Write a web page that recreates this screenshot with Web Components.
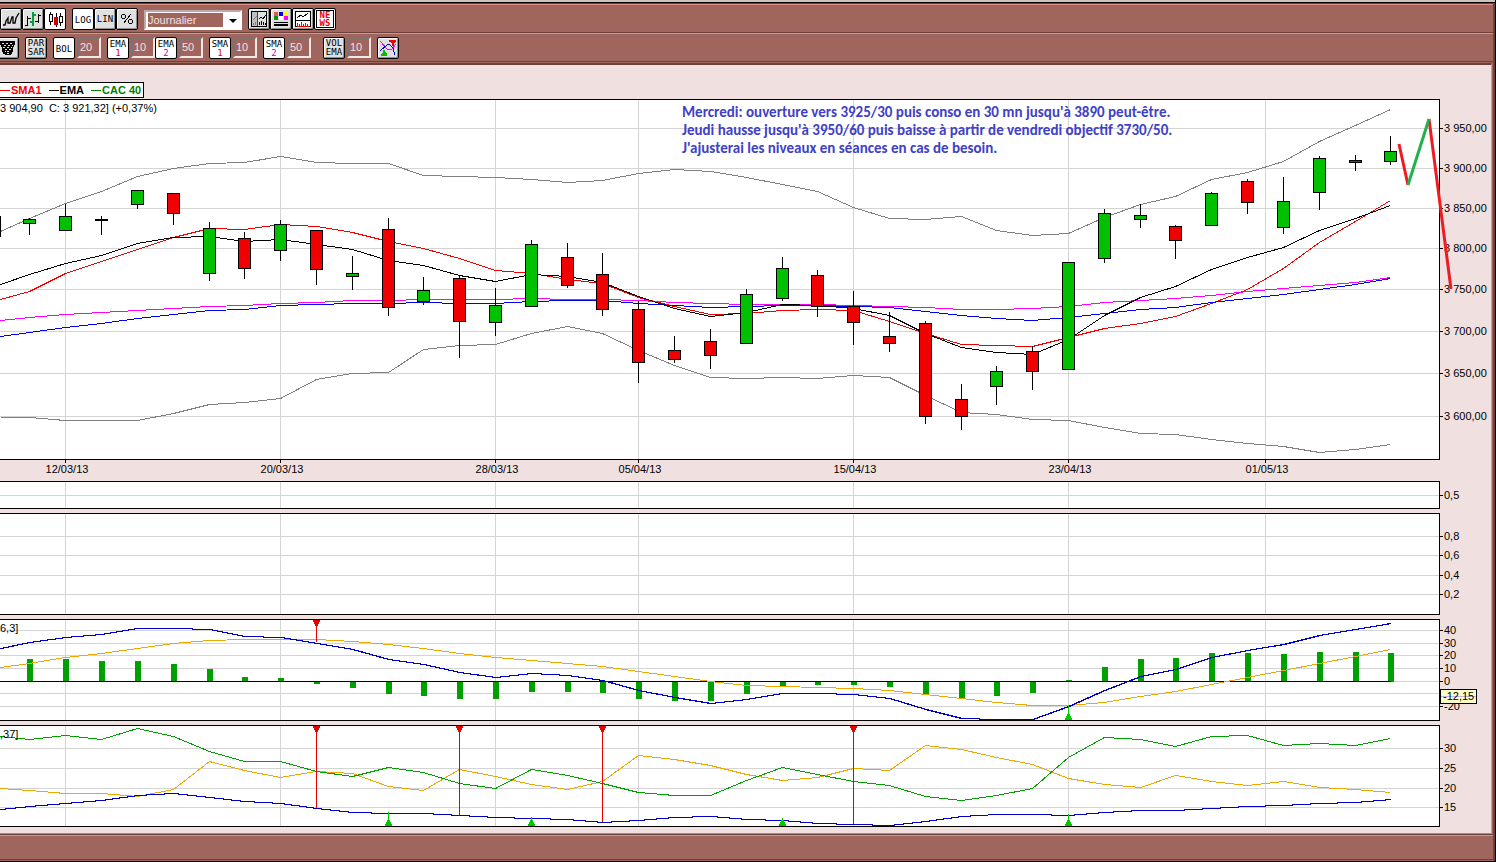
<!DOCTYPE html>
<html lang="fr">
<head>
<meta charset="utf-8">
<title>CAC 40</title>
<style>
    body {
        margin: 0;
        overflow-x: hidden;
        font-family: "Liberation Sans", Arial, sans-serif;
        font-size: 11px;
        color: #000;
        --brown: #a0665e;
        --light: #e09084;
        --dark: #6e4039;
        --paper: #f0e0e0;
    }
</style>
</head>
<body>
<trading-window>
    <tool-bar slot="bars" label="Affichage">
        <tool-group>
            <tool-button icon="line" label="Ligne"></tool-button>
            <tool-button icon="bars" label="Barres"></tool-button>
            <tool-button icon="candles" label="Chandeliers" pressed></tool-button>
        </tool-group>
        <tool-group>
            <tool-button label="Logarithmique" pressed>LOG</tool-button>
            <tool-button label="Linéaire">LIN</tool-button>
            <tool-button icon="percent" label="Pourcentage"></tool-button>
        </tool-group>
        <period-select></period-select>
        <tool-group>
            <tool-button icon="compare" label="Comparer"></tool-button>
            <tool-button icon="colors" label="Couleurs"></tool-button>
            <tool-button icon="volume" label="Volume"></tool-button>
            <tool-button label="News" tone="#f00000" pressed framed>NE<br>WS</tool-button>
        </tool-group>
    </tool-bar>
    <tool-bar slot="bars" label="Indicateurs" scrolled>
        <tool-button icon="trash" label="Effacer"></tool-button>
        <tool-button label="Parabolic SAR">PAR<br>SAR</tool-button>
        <tool-field label="Bollinger" value="20" pressed>BOL</tool-field>
        <tool-group>
            <tool-field label="EMA 1" value="10" pressed>EMA<br><span style="color:#e00000">1</span></tool-field>
            <tool-field label="EMA 2" value="50" pressed>EMA<br><span style="color:#c000c0">2</span></tool-field>
        </tool-group>
        <tool-field label="SMA 1" value="10" pressed>SMA<br><span style="color:#e00000">1</span></tool-field>
        <tool-field label="SMA 2" value="50" pressed>SMA<br><span style="color:#c000c0">2</span></tool-field>
        <tool-group spaced>
            <tool-field label="Volume EMA" value="10">VOL<br>EMA</tool-field>
        </tool-group>
        <tool-button icon="signals" label="Signaux"></tool-button>
    </tool-bar>
    <chart-legend>
        <legend-item color="#f00000">SMA1</legend-item>
        <legend-item color="#000000">EMA</legend-item>
        <legend-item color="#008000">CAC 40</legend-item>
    </chart-legend>
    <chart-pane name="price">
        <span slot="title">3 904,90&nbsp; C: 3 921,32] (+0,37%)</span>
        <chart-note slot="note">Mercredi: ouverture vers 3925/30 puis conso en 30 mn jusqu'à 3890 peut-être.<br>Jeudi hausse jusqu'à 3950/60 puis baisse à partir de vendredi objectif 3730/50.<br>J'ajusterai les niveaux en séances en cas de besoin.</chart-note>
    </chart-pane>
    <chart-pane name="small"></chart-pane>
    <chart-pane name="empty"></chart-pane>
    <chart-pane name="macd"><span slot="title">6,3]</span></chart-pane>
    <chart-pane name="dmi"><span slot="title">,37]</span></chart-pane>
</trading-window>

<script>
// bar centres, one per trading day
const DAYS = [29, 65, 101, 137, 173, 209, 244, 280, 316, 352, 388, 423, 459, 495, 531, 567, 602, 638, 674, 710,
    746, 782, 817, 853, 889, 925, 961, 996, 1032, 1068, 1104, 1140, 1175, 1211, 1247, 1283, 1319, 1355, 1390];
const DATES = [[65, '12/03/13'], [280, '20/03/13'], [495, '28/03/13'], [638, '05/04/13'], [853, '15/04/13'], [1068, '23/04/13'], [1265, '01/05/13']];
const PLOT_WIDTH = 1439;

// high, body top, body bottom, low, direction
const CANDLES = [
    [218, 219, 223, 234, 'u'], [204, 216, 230, 230, 'u'], [216, 219, 220, 234, 'd'], [190, 190, 204, 208, 'u'],
    [193, 193, 213, 224, 'd'], [222, 228, 273, 280, 'u'], [232, 238, 268, 278, 'd'], [220, 224, 250, 260, 'u'],
    [230, 230, 269, 284, 'd'], [256, 273, 276, 289, 'u'], [218, 229, 307, 315, 'd'], [277, 290, 301, 304, 'u'],
    [275, 278, 321, 357, 'd'], [288, 305, 322, 335, 'u'], [240, 244, 306, 306, 'u'], [243, 257, 285, 287, 'd'],
    [253, 274, 309, 315, 'd'], [301, 309, 362, 382, 'd'], [336, 350, 359, 362, 'd'], [329, 341, 355, 368, 'd'],
    [289, 294, 343, 343, 'u'], [257, 268, 298, 300, 'u'], [270, 275, 306, 316, 'd'], [291, 306, 322, 344, 'd'],
    [312, 336, 343, 351, 'd'], [321, 323, 416, 423, 'd'], [384, 399, 416, 429, 'd'], [366, 371, 386, 404, 'u'],
    [346, 351, 371, 389, 'd'], [262, 262, 369, 369, 'u'], [209, 213, 258, 262, 'u'], [204, 215, 219, 227, 'u'],
    [225, 226, 240, 258, 'd'], [192, 193, 225, 225, 'u'], [179, 181, 202, 213, 'd'], [177, 201, 227, 233, 'u'],
    [156, 158, 192, 209, 'u'], [155, 160, 162, 170, 'd'], [136, 151, 161, 164, 'u']
];

// series values start at the left edge, then one per day
const PANES = {
    price: {
        top: 99, height: 361, dates: true, candles: true,
        scale: [[128, '3 950,00'], [168, '3 900,00'], [208, '3 850,00'], [248, '3 800,00'], [289, '3 750,00'], [331, '3 700,00'], [373, '3 650,00'], [416, '3 600,00']],
        series: [
            ['#808080', [231, 218, 203, 191, 176, 168, 163, 162, 156, 162, 163, 163, 175, 176, 177, 179, 182, 180, 173, 169, 171, 177, 184, 191, 207, 218, 219, 216, 230, 235, 233, 217, 204, 196, 179, 172, 161, 141, 125, 109]],
            ['#808080', [417, 417, 420, 420, 420, 413, 404, 402, 398, 379, 373, 372, 349, 345, 344, 333, 326, 333, 350, 365, 377, 378, 377, 378, 375, 377, 395, 412, 414, 419, 420, 427, 433, 434, 439, 443, 446, 452, 449, 444]],
            ['#f00000', [299, 291, 273, 261, 249, 237, 228, 229, 224, 226, 232, 241, 248, 258, 270, 273, 279, 283, 297, 306, 314, 313, 310, 309, 310, 321, 333, 344, 345, 346, 337, 328, 323, 316, 303, 289, 268, 242, 221, 200]],
            ['#ff00ff', [320, 317, 314, 312, 310, 308, 306, 305, 303, 302, 300, 300, 299, 299, 299, 298, 299, 299, 300, 302, 303, 304, 304, 304, 305, 306, 307, 309, 309, 308, 306, 302, 300, 298, 295, 291, 288, 285, 282, 277]],
            ['#0000f0', [336, 332, 327, 323, 318, 314, 310, 309, 305, 304, 303, 303, 302, 303, 303, 301, 300, 300, 303, 305, 307, 306, 305, 305, 306, 307, 311, 315, 318, 320, 317, 313, 309, 307, 302, 298, 294, 289, 284, 278]],
            ['#000000', [284, 274, 263, 255, 243, 237, 236, 241, 239, 244, 249, 260, 265, 275, 281, 274, 276, 282, 296, 308, 316, 312, 304, 305, 308, 315, 333, 347, 352, 354, 339, 315, 297, 286, 269, 257, 247, 230, 218, 205]]
        ]
    },
    small: {top: 481, height: 28, scale: [[495, '0,5']], series: []},
    empty: {top: 513, height: 102, scale: [[536, '0,8'], [555, '0,6'], [575, '0,4'], [594, '0,2']], series: []},
    macd: {
        top: 619, height: 102, zero: 681,
        scale: [[630, '40'], [643, '30'], [655, '20'], [668, '10'], [681, '0'], [693, ''], [706, '-20']],
        bars: [659, 659, 661, 661, 664, 669, 677, 678, 683, 687, 693, 695, 698, 698, 691, 691, 692, 698, 700, 700, 693, 685, 684, 684, 686, 694, 697, 695, 692, 680, 667, 659, 658, 653, 653, 654, 652, 652, 653],
        series: [
            ['#f0a800', [667, 663, 657, 653, 648, 643, 640, 639, 639, 639, 641, 644, 648, 653, 657, 660, 663, 666, 671, 676, 681, 685, 686, 687, 688, 690, 694, 698, 702, 705, 705, 702, 696, 691, 684, 677, 670, 663, 656, 649]],
            ['#0000c8', [648, 642, 637, 634, 628, 628, 629, 636, 637, 643, 649, 659, 664, 672, 677, 673, 675, 680, 690, 697, 703, 699, 693, 693, 694, 698, 709, 718, 719, 719, 706, 690, 676, 669, 657, 650, 644, 635, 629, 623], 'wide']
        ],
        sells: [[316, 642]],
        buys: [[1068, 706]],
        tag: [696, '-12,15']
    },
    dmi: {
        top: 725, height: 102,
        scale: [[748, '30'], [768, '25'], [788, '20'], [807, '15']],
        series: [
            ['#f0a800', [788, 790, 793, 793, 796, 789, 761, 770, 777, 771, 773, 786, 790, 769, 776, 784, 789, 781, 755, 759, 765, 774, 780, 777, 768, 770, 745, 749, 757, 764, 778, 784, 787, 775, 781, 785, 781, 787, 789, 792]],
            ['#00a000', [736, 739, 735, 739, 728, 736, 751, 761, 761, 771, 776, 767, 772, 783, 788, 769, 775, 783, 792, 795, 795, 780, 767, 774, 781, 785, 796, 800, 795, 788, 757, 737, 739, 746, 736, 735, 745, 743, 745, 738]],
            ['#0000c8', [809, 806, 803, 800, 795, 793, 797, 801, 803, 808, 812, 813, 813, 815, 817, 818, 819, 822, 820, 817, 816, 819, 820, 823, 824, 825, 821, 816, 814, 814, 815, 812, 810, 810, 808, 806, 805, 803, 802, 799], 'wide']
        ],
        sells: [[316, 808], [459, 815], [602, 822], [853, 824]],
        buys: [[388, 812], [531, 817], [782, 818], [1068, 814]]
    }
};

const ICONS = {
    line: '<path d="M2 16h2l1-4 2-3v5h2l2-6h1v6h2l1-5 3-5" fill="none" stroke="#000" stroke-width="1.300" shape-rendering="auto"/>',
    bars: '<path d="M4.500 7v10M2 16.500h2M5 9.500h3M15.500 5v9M12 12.500h3M16 6.500h2" stroke="#000" fill="none"/><path d="M10 3v14M7 13h3M10 6h3" stroke="#00a040" stroke-width="2" fill="none"/>',
    candles: '<path d="M5.500 3v2M5.500 13v3M15.500 4v3M15.500 14v3M4.500 5.500h3v7h-3zM14.500 7.500h3v6h-3z" fill="none" stroke="#000"/><path d="M11 4v14" stroke="#000"/><path d="M9 8h4v8H9z" fill="#d00000"/>',
    percent: '<circle cx="6.500" cy="7.500" r="2" fill="none" stroke="#000"/><circle cx="13.500" cy="12.500" r="2" fill="none" stroke="#000"/><path d="M13.500 5.500l-7 9" stroke="#000"/>',
    compare: '<path d="M3 3h6v14H3z" fill="#c0c0c0"/><path d="M2.500 2.500h15v15h-15z" fill="none" stroke="#000"/><path d="M4 11l4-4" stroke="#808080"/><path d="M4.500 14v2M6.500 13v3" stroke="#808080"/><path d="M8.500 3v14" stroke="#e00000"/><path d="M10 10l2-2 2 2 3-4" fill="none" stroke="#000"/><path d="M10.500 13v3M12.500 12v4M14.500 13v3M16.500 14v2" stroke="#000"/>',
    colors: '<path d="M3 3h4v4H3z" fill="#e05858"/><path d="M8 3h4v4H8z" fill="#0000f0"/><path d="M13 3h4v4h-4z" fill="#ffff00"/><path d="M3 7h4v4H3z" fill="#109010"/><path d="M8 7h4v4H8z" fill="#fff"/><path d="M13 7h4v4h-4z" fill="#ff00ff"/><path d="M3 13h14v1H3zM3 15h14v2H3z" fill="#000"/>',
    volume: '<path d="M2.500 2.500h15v15h-15z" fill="#fff" stroke="#000"/><path d="M2 11.500h15" stroke="#000"/><path d="M4 9l4-3 2 2 5-4" fill="none" stroke="#000"/><path d="M4 17.500h12" stroke="#f00000"/><path d="M4.500 14v3M6.500 15v2M8.500 13v4M10.500 15v2M12.500 14v3M14.500 15v2" stroke="#f00000"/>',
    trash: '<path d="M2 3h15v4h-1l-2 9-2 1H8l-3-1-2-9H2z" fill="#000"/><path d="M4 5h2M8 5h2M12 5h2M6 7h2M10 7h2M14 7h1M5 9h2M9 9h2M13 9h1M7 11h2M11 11h2M7 13h1M9 13h2M9 15h2" stroke="#e0e0e0"/>',
    signals: '<path d="M2 3l7 8h5l4-5" fill="none" stroke="#ff00ff"/><path d="M2 13l7-6 2-1 4 4 2 7" fill="none" stroke="#0000e0"/><path d="M11 2h7v2l-2 1v3h-2V5l-3-1z" fill="#f00000"/><path d="M5 12h2v2l2 2v2H3v-2l2-2z" fill="#00c000"/>'
};

const control = `
    * { box-sizing: border-box; }
    button {
        display: block;
        width: 22px;
        height: 22px;
        padding: 0;
        border: 1px solid #000;
        border-radius: 2px;
        background: #e0e0e0;
        box-shadow: inset 1px 1px #fff, inset -1px -1px #909090;
        color: #000;
        font: 9px/9px "DejaVu Sans Mono", monospace;
        text-align: center;
    }
    button.pressed { background: #fff; box-shadow: none; }
    button.pressed.text { padding-top: 2px; }
    button.pressed.framed {
        padding-top: 0;
        line-height: 8px;
        font-weight: bold;
        box-shadow: inset 0 0 0 1px #fff, inset 0 0 0 2px #000;
    }
    svg { display: block; }
`;

class TradingWindow extends HTMLElement {
    connectedCallback() {
        this.attachShadow({ mode: 'open' });
        this.shadowRoot.innerHTML = `
            <style>
                :host {
                    display: flex;
                    flex-direction: column;
                    box-sizing: border-box;
                    min-height: 100vh;
                    overflow: hidden;
                    background: var(--brown);
                    border-right: 1px solid #000;
                    border-bottom: 1px solid #000;
                }
                .edge {
                    height: 1px;
                    border-top: 2px solid #d0c4c0;
                    border-bottom: 1px solid var(--dark);
                    background: #000;
                }
                .frame {
                    flex: 1;
                    display: flex;
                    flex-direction: column;
                    border-right: 2px solid var(--dark);
                }
                main {
                    display: flex;
                    flex-direction: column;
                    gap: 4px;
                    margin-top: 1px;
                    padding: 17px 51px 6px 0;
                    background: var(--paper);
                    border-top: 2px solid var(--dark);
                    border-right: 1px solid var(--light);
                    border-bottom: 1px solid #c88078;
                    margin-right: 1px;
                }
                footer {
                    flex: 1;
                    min-height: 24px;
                    border-top: 1px solid var(--dark);
                    border-bottom: 1px solid var(--dark);
                    margin-bottom: 1px;
                    box-shadow: inset 0 1px var(--light);
                }
            </style>
            <div class="edge"></div>
            <div class="frame">
                <header><slot name="bars"></slot></header>
                <main><slot></slot></main>
                <footer></footer>
            </div>
        `;
    }
}

class ToolBar extends HTMLElement {
    connectedCallback() {
        this.attachShadow({ mode: 'open' });
        this.shadowRoot.innerHTML = `
            <style>
                :host {
                    display: block;
                    border-top: 1px solid var(--light);
                    border-bottom: 1px solid var(--dark);
                }
                div {
                    display: flex;
                    align-items: flex-start;
                    gap: 6px;
                    height: 24px;
                    padding-top: 3px;
                }
                /* the second row is scrolled a little to the left */
                :host([scrolled]) div { margin-left: -3px; }
            </style>
            <div role="toolbar" aria-label="${this.getAttribute('label')}"><slot></slot></div>
        `;
    }
}

class ToolGroup extends HTMLElement {
    connectedCallback() {
        this.attachShadow({ mode: 'open' });
        this.shadowRoot.innerHTML = `
            <style>
                :host { display: flex; }
                :host([spaced]) { margin-left: 6px; }
            </style>
            <slot></slot>
        `;
    }
}

class ToolButton extends HTMLElement {
    connectedCallback() {
        const icon = ICONS[this.getAttribute('icon')];
        const pressed = this.hasAttribute('pressed');
        this.attachShadow({ mode: 'open' });
        this.shadowRoot.innerHTML = `
            <style>
                ${control}
                :host { display: block; }
            </style>
            <button type="button" aria-label="${this.getAttribute('label')}" aria-pressed="${pressed}"
                class="${pressed ? 'pressed' : ''} ${icon ? '' : 'text'} ${this.hasAttribute('framed') ? 'framed' : ''}" style="color:${this.getAttribute('tone') || '#000'}">
                ${icon ? `<svg width="20" height="20" viewBox="0 0 20 20" shape-rendering="crispEdges" aria-hidden="true">${icon}</svg>` : '<slot></slot>'}
            </button>
        `;
    }
}

class ToolField extends HTMLElement {
    connectedCallback() {
        const label = this.getAttribute('label');
        const pressed = this.hasAttribute('pressed');
        this.attachShadow({ mode: 'open' });
        this.shadowRoot.innerHTML = `
            <style>
                ${control}
                :host { display: flex; gap: 2px; }
                input {
                    width: 24px;
                    height: 21px;
                    padding: 0 0 2px 1px;
                    border: 2px solid;
                    border-color: #807070 #f0e8e8 #f0e8e8 #807070;
                    border-radius: 0;
                    background: var(--brown);
                    color: #f0e0e0;
                    font: 11px "Liberation Sans", Arial, sans-serif;
                }
            </style>
            <button type="button" aria-label="${label}" aria-pressed="${pressed}" class="text ${pressed ? 'pressed' : ''}"><slot></slot></button>
            <input type="text" aria-label="${label} période" value="${this.getAttribute('value')}">
        `;
    }
}

class PeriodSelect extends HTMLElement {
    connectedCallback() {
        this.attachShadow({ mode: 'open' });
        this.shadowRoot.innerHTML = `
            <style>
                :host { display: block; position: relative; width: 98px; margin-top: 2px; }
                select {
                    appearance: none;
                    display: block;
                    box-sizing: border-box;
                    width: 100%;
                    height: 20px;
                    padding: 1px 17px 1px 2px;
                    border: 2px solid;
                    border-color: #c0a8a8 #fff #fff #c0a8a8;
                    border-radius: 0;
                    background: linear-gradient(var(--brown), var(--brown)) content-box, #fff;
                    color: #f0e0e0;
                    font: 11px/14px "Liberation Sans", Arial, sans-serif;
                }
                i {
                    position: absolute;
                    right: 5px;
                    top: 9px;
                    border: 4px solid transparent;
                    border-top-color: #000;
                    border-bottom: 0;
                    pointer-events: none;
                }
            </style>
            <select aria-label="Période">
                <option>Journalier</option>
                <option>Hebdomadaire</option>
                <option>Mensuel</option>
            </select>
            <i></i>
        `;
    }
}

class ChartLegend extends HTMLElement {
    connectedCallback() {
        this.attachShadow({ mode: 'open' });
        this.shadowRoot.innerHTML = `
            <style>
                :host {
                    display: flex;
                    align-self: flex-start;
                    gap: 7px;
                    box-sizing: border-box;
                    height: 16px;
                    margin-bottom: -3px;
                    padding-right: 2px;
                    border: 1px solid #000;
                    border-left: 0;
                    background: #fff;
                }
            </style>
            <slot></slot>
        `;
    }
}

class LegendItem extends HTMLElement {
    connectedCallback() {
        this.attachShadow({ mode: 'open' });
        this.shadowRoot.innerHTML = `
            <style>
                :host {
                    display: flex;
                    align-items: center;
                    gap: 1px;
                    color: ${this.getAttribute('color')};
                    font-weight: bold;
                    line-height: 14px;
                }
                i { width: 10px; height: 1px; background: currentColor; }
            </style>
            <i></i><slot></slot>
        `;
    }
}

class ChartNote extends HTMLElement {
    connectedCallback() {
        this.attachShadow({ mode: 'open' });
        this.shadowRoot.innerHTML = `
            <style>
                :host {
                    display: block;
                    color: #4040c8;
                    font: bold 15px/18px Carlito, Lato, sans-serif;
                    white-space: nowrap;
                }
            </style>
            <slot></slot>
        `;
    }
}

class ChartPane extends HTMLElement {
    connectedCallback() {
        const pane = PANES[this.getAttribute('name')];
        this.attachShadow({ mode: 'open' });
        this.shadowRoot.innerHTML = `
            <style>
                :host {
                    display: block;
                    position: relative;
                    box-sizing: border-box;
                    height: ${pane.height}px;
                    border: 1px solid #000;
                    border-left: 0;
                    background: #fff;
                }
                :host([name="price"]) { margin-bottom: 17px; }
                svg { display: block; width: 100%; height: 100%; overflow: visible; }
                text { font-size: 11px; }
                .title { position: absolute; left: 0; top: 2px; line-height: 12px; white-space: nowrap; }
                .note { position: absolute; left: calc(100% - 757px); top: 3px; }
            </style>
            <svg shape-rendering="crispEdges">${this.draw(pane)}</svg>
            <div class="title"><slot name="title"></slot></div>
            <div class="note"><slot name="note"></slot></div>
        `;
    }

    // everything is anchored to the right edge, older days run off to the left
    draw(pane) {
        const bottom = pane.top + pane.height - 1;
        const y0 = pane.top + 1;
        let out = '';
        pane.scale.forEach(([y]) => {
            out += `<rect y="${y - y0}" width="100%" height="1" fill="#d4d4d4"/>`;
        });
        out += `<svg x="100%" overflow="visible"><g transform="translate(${-PLOT_WIDTH} ${-y0})">`;
        DATES.forEach(([x, label]) => {
            out += `<rect x="${x}" y="${y0}" width="1" height="${bottom - y0}" fill="#d4d4d4"/>`;
            if (pane.dates) {
                out += `<rect x="${x}" y="${bottom}" width="1" height="4"/><text x="${x + 2}" y="473" text-anchor="middle">${label}</text>`;
            }
        });
        pane.scale.forEach(([y, label]) => {
            if (label) out += `<rect x="1440" y="${y}" width="3" height="1"/><text x="1444" y="${y + 4}">${label}</text>`;
        });
        (pane.bars || []).forEach((y, i) => {
            const top = Math.min(y, pane.zero);
            out += `<rect x="${DAYS[i] - 2}" y="${top}" width="6" height="${Math.abs(y - pane.zero) + 1}" fill="#00a000"/>`;
        });
        if (pane.zero) out += `<rect y="${pane.zero}" width="1391" height="1"/>`;
        pane.series.forEach(([color, values, wide]) => {
            // wide lines get a second pass one pixel to the right
            for (let dx = 0; dx <= (wide ? 1 : 0); dx++) {
                const points = values.map((y, i) => `${(i ? DAYS[i - 1] : 0) + dx + 0.5},${y + 0.5}`).join(' ');
                out += `<polyline points="${points}" fill="none" stroke="${color}"/>`;
            }
        });
        if (pane.candles) out += this.candles();
        (pane.sells || []).forEach(([x, y]) => {
            out += `<rect x="${x}" y="${y0}" width="1" height="${y - y0}" fill="#e80000"/><path d="M${x - 3} ${y0}h7v2h-1v2h-1v2h-3v-2h-1v-2h-1z" fill="#e80000"/>`;
        });
        (pane.buys || []).forEach(([x, y]) => {
            out += `<rect x="${x}" y="${y}" width="1" height="${bottom - y}" fill="#00c800"/><path d="M${x - 3} ${bottom}h7v-2h-1v-2h-1v-2h-3v2h-1v2h-1z" fill="#00c800"/>`;
        });
        if (pane.tag) {
            const [y, label] = pane.tag;
            out += `<rect x="1440.5" y="${y - 6.5}" width="36" height="14" fill="#ffffc8" stroke="#000"/>
                <rect x="1441" y="${y}" width="35" height="1" fill="#b8b8e8"/><text x="1443" y="${y + 4}">${label}</text>`;
        }
        return out + '</g></svg>';
    }

    candles() {
        let out = '<rect y="216" width="1" height="21"/>';
        CANDLES.forEach(([high, top, end, low, way], i) => {
            const x = DAYS[i];
            out += `<rect x="${x}" y="${high}" width="1" height="${low - high + 1}"/>
                <rect x="${x - 5.5}" y="${top + 0.5}" width="12" height="${end - top}" fill="${way === 'u' ? '#00c000' : '#f00000'}" stroke="#000"/>`;
        });
        // forecast drawn by hand over the chart
        out += `<g fill="none" stroke-width="3" shape-rendering="auto">
            <path d="M1399 144l9 41M1429 119l22 170" stroke="#ed1c24"/>
            <path d="M1408 185l21-66" stroke="#22b14c"/></g>`;
        return out;
    }
}

customElements.define('trading-window', TradingWindow);
customElements.define('tool-bar', ToolBar);
customElements.define('tool-group', ToolGroup);
customElements.define('tool-button', ToolButton);
customElements.define('tool-field', ToolField);
customElements.define('period-select', PeriodSelect);
customElements.define('chart-legend', ChartLegend);
customElements.define('legend-item', LegendItem);
customElements.define('chart-note', ChartNote);
customElements.define('chart-pane', ChartPane);
</script>
</body>
</html>
